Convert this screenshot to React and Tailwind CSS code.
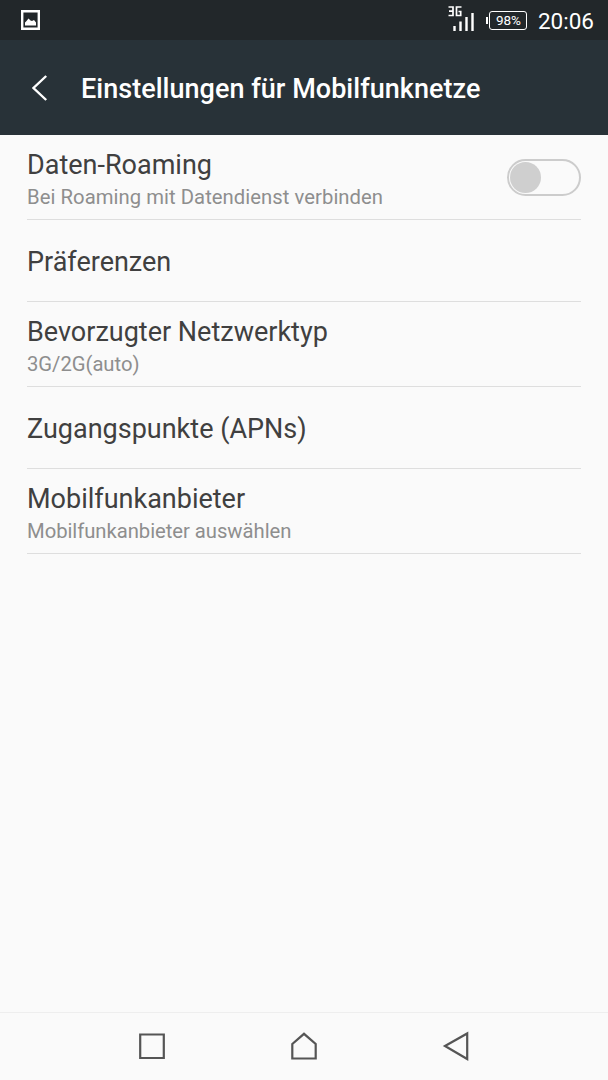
const settings = [
  { title: 'Daten-Roaming', summary: 'Bei Roaming mit Datendienst verbinden', toggle: true },
  { title: 'Präferenzen' },
  { title: 'Bevorzugter Netzwerktyp', summary: '3G/2G(auto)' },
  { title: 'Zugangspunkte (APNs)' },
  { title: 'Mobilfunkanbieter', summary: 'Mobilfunkanbieter auswählen' },
];

const StatusBar = () => (
  <div className="flex h-10 shrink-0 items-center bg-[#22272a] pl-[21px] pr-3.5 text-white">
    <svg width="19" height="20" viewBox="0 0 19 20" fill="none">
      <path d="M1.200 1.200h16.600v17.600h-16.600z" stroke="#fff" strokeWidth="2.4" />
      <path d="M4 15.500v-3l1.500-1.500L7.500 8.500L9.500 10.500L11 11L13 10L15 12.500v3z" fill="#fff" />
    </svg>
    {/* network type sits on top of the signal bars */}
    <svg className="ml-auto" width="28" height="28" viewBox="0 0 28 28" fill="none" stroke="#fff">
      <path d="M0.500 1h4.500v8.500H0.500M1 5.200h4M13.500 1H8.500v8.500h4.200V5.500H10.500" strokeWidth="1.7" />
      <path d="M6.500 20v5M12.500 15.500v9.500M18.500 11v14M24.500 7v18" strokeWidth="2.4" />
    </svg>
    <div className="ml-2.5 mt-px flex items-center">
      <div className="mr-px h-[7px] w-[1.500px] bg-white" />
      <div className="flex h-[19px] w-[38px] items-center justify-center rounded-[3px] border border-white pt-px pl-px text-[13.500px] leading-none">98%</div>
    </div>
    <span className="ml-[11px] mt-px text-[22.500px] leading-7">20:06</span>
  </div>
);

const Header = () => (
  <header className="flex h-[95px] shrink-0 items-center bg-[#283238] pl-8 text-white">
    <svg width="16" height="26" viewBox="0 0 16 26" fill="none" stroke="#fff" strokeWidth="2.4">
      <path d="M14.200 1L1.500 13L14.200 25" />
    </svg>
    <h1 className="ml-[33px] mt-0.5 text-[27px] font-medium leading-8 tracking-[0.03px]">Einstellungen für Mobilfunknetze</h1>
  </header>
);

const Switch = () => (
  <div className="flex h-[37px] w-[74px] items-center rounded-full border-2 border-[#cccccc] px-px">
    <div className="size-[31px] rounded-full bg-[#cfcfcf]" />
  </div>
);

const SettingRow = ({ title, summary, toggle }) => (
  <li className={`flex items-center justify-between border-b border-[#dedede] ${summary ? 'h-[85px]' : 'h-[82px]'}`}>
    <div className="pt-[3px]">
      <p className="text-[27px] leading-8 text-[#404040]">{title}</p>
      {summary && (
        <p className={`mt-1 text-[20.250px] leading-6 text-[#8e8e8e] ${toggle ? 'tracking-[0.05px]' : 'tracking-[-0.04px]'}`}>{summary}</p>
      )}
    </div>
    {toggle && <Switch />}
  </li>
);

const NavBar = () => (
  <nav className="flex h-[68px] shrink-0 items-center justify-center gap-[120px] border-t border-[#eeeeee] pb-0.5">
    <svg width="32" height="32" viewBox="0 0 32 32" fill="none" stroke="#555" strokeWidth="2.2">
      <path d="M4.200 4.500h23.600v23.500h-23.600z" />
    </svg>
    <svg width="32" height="32" viewBox="0 0 32 32" fill="none" stroke="#555" strokeWidth="2.2">
      <path d="M4.300 14L16 3.800L27.700 14v14.500h-23.400z" />
    </svg>
    <svg width="32" height="32" viewBox="0 0 32 32" fill="none" stroke="#555" strokeWidth="2.2">
      <path d="M5 16L27.200 3.500v25.500z" />
    </svg>
  </nav>
);

const App = () => (
  <div className="flex h-[1080px] w-[608px] flex-col overflow-hidden bg-[#fafafa] font-['Roboto',sans-serif]">
    <StatusBar />
    <Header />
    <ul className="flex-1 px-[27px]">
      {settings.map(s => <SettingRow key={s.title} {...s} />)}
    </ul>
    <NavBar />
  </div>
);

export default App;
